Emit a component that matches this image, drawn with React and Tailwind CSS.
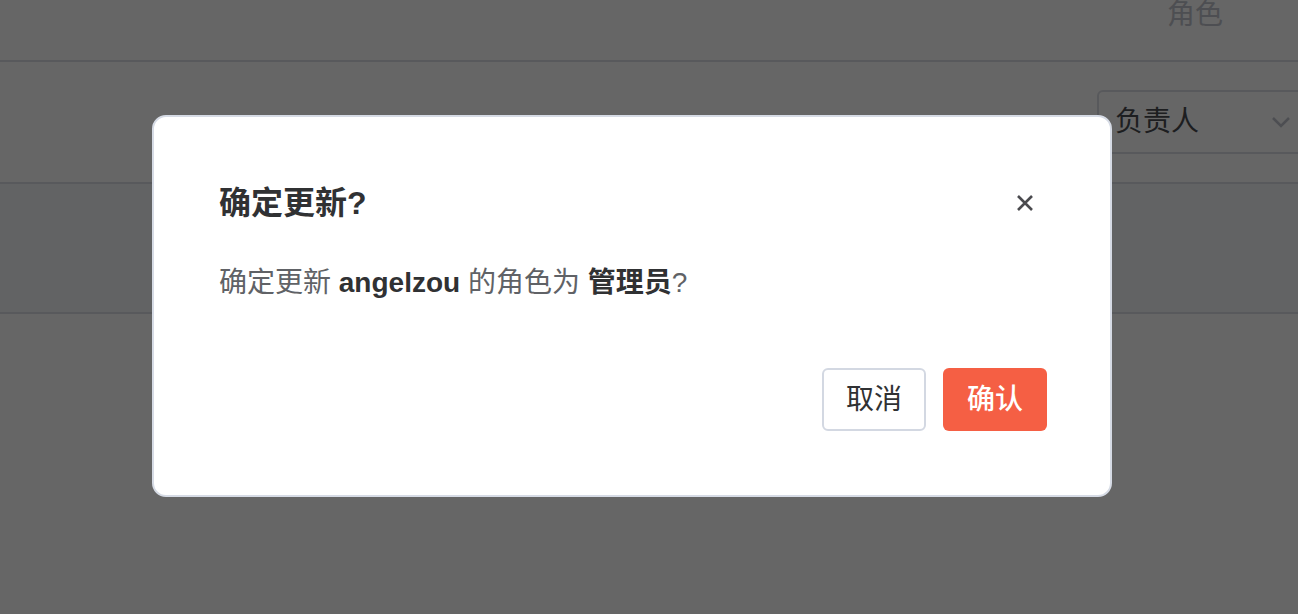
import React from "react";

export default function App() {
  return (
    <div
      className="relative w-[1298px] h-[614px] overflow-hidden bg-white font-['Liberation_Sans','Noto_Sans_CJK_SC',sans-serif]"
    >
      {/* background table */}
      <div className="flex flex-col">
        <div className="h-[60px] flex">
          <div className="ml-[1167px] text-[28px] leading-[30px] text-[#c0c4cc]">角色</div>
        </div>
        <div className="h-[2px] bg-[#dcdfe6]" />
        <div className="h-[120px] flex items-start pt-[28px] pl-[1097px]">
          <div className="w-[216px] shrink-0 h-[64px] border-2 border-[#dcdfe6] rounded-[6px] flex items-center justify-between pl-[16px] pr-[20px] bg-white">
            <span className="text-[28px] text-[#4a4c50]">负责人</span>
            <svg width="20" height="12" viewBox="0 0 20 12" fill="none">
              <path d="M2 2 L10 10 L18 2" stroke="#c0c4cc" strokeWidth="2.5" />
            </svg>
          </div>
        </div>
        <div className="h-[2px] bg-[#dcdfe6]" />
        <div className="h-[128px] bg-[#f5f7fa]" />
        <div className="h-[2px] bg-[#dcdfe6]" />
      </div>

      {/* overlay */}
      <div className="absolute inset-0 bg-black/60" />

      {/* dialog */}
      <div className="absolute left-[152px] top-[115px] w-[960px] h-[382px] bg-white rounded-[14px] border-2 border-[#d6dbe5] pl-[65px] pr-[63px] pt-[66px] flex flex-col">
        <div className="flex items-center justify-between h-[40px]">
          <div className="text-[32px] leading-[40px] font-bold text-[#303133]">确定更新?</div>
          <div className="w-[40px] h-[40px] mr-[2px] flex items-center justify-center">
            <svg width="18" height="18" viewBox="0 0 18 18" fill="none">
              <path d="M2 2 L16 16 M16 2 L2 16" stroke="#4a4a4e" strokeWidth="2.6" />
            </svg>
          </div>
        </div>
        <div className="mt-[40px] text-[28px] leading-[40px] text-[#606266]">
          确定更新 <span className="font-bold text-[#303133]">angelzou</span> 的角色为{" "}
          <span className="font-bold text-[#303133]">管理员</span>?
        </div>
        <div className="mt-[65px] flex justify-end gap-[17px]">
          <button className="w-[104px] h-[63px] rounded-[6px] border-2 border-[#d3d8e2] bg-white text-[28px] text-[#303133] flex items-center justify-center">
            取消
          </button>
          <button className="w-[104px] h-[63px] rounded-[6px] bg-[#f55f44] text-[28px] font-medium text-white flex items-center justify-center">
            确认
          </button>
        </div>
      </div>
    </div>
  );
}
